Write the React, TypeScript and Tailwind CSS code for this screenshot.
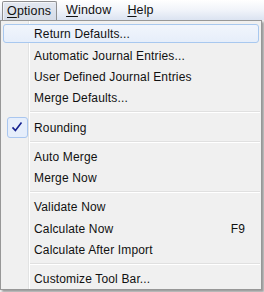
import { ReactNode } from 'react';

// item do menu: altura fixa, texto alinhado depois da calha dos ícones
type Item = {
  label: string;
  shortcut?: string;
  checked?: boolean;
  hover?: boolean;
};

const groups: Item[][] = [
  [
    { label: 'Return Defaults...', hover: true },
    { label: 'Automatic Journal Entries...' },
    { label: 'User Defined Journal Entries' },
    { label: 'Merge Defaults...' },
  ],
  [{ label: 'Rounding', checked: true }],
  [{ label: 'Auto Merge' }, { label: 'Merge Now' }],
  [
    { label: 'Validate Now' },
    { label: 'Calculate Now', shortcut: 'F9' },
    { label: 'Calculate After Import' },
  ],
  [{ label: 'Customize Tool Bar...' }],
];

function Mnemonic({ first, rest }: { first: string; rest: string }) {
  return (
    <span>
      <span className="underline underline-offset-[2px]">{first}</span>
      {rest}
    </span>
  );
}

function BarItem({ children, open }: { children: ReactNode; open?: boolean }) {
  return (
    <div
      className={
        open
          ? 'flex h-[19px] w-[55px] items-center rounded-t-[2px] border border-b-0 border-[#8e8f91] bg-gradient-to-b from-[#e3e8f1] to-[#d5dce8] px-[4px] text-[12.5px] shadow-[inset_1px_1px_0_rgba(255,255,255,0.6)]'
          : 'flex h-[19px] items-center pl-[9px] pr-[7px] text-[12.5px]'
      }
    >
      {children}
    </div>
  );
}

function Check() {
  return (
    <svg width="12" height="12" viewBox="0 0 12 12" aria-hidden="true">
      <path
        d="M1.5 6.4 L4.4 9.6 L10.5 1.5"
        fill="none"
        stroke="#14208f"
        strokeWidth="1.6"
      />
    </svg>
  );
}

function MenuRow({ item }: { item: Item }) {
  return (
    <div className="relative flex h-[21.4px] items-center">
      {item.hover && (
        <div className="absolute inset-x-[2px] inset-y-[1px] rounded-[3px] border border-[#a8c8ef] bg-gradient-to-b from-[#f1f5fc] to-[#e6eefa]" />
      )}
      <div className="flex w-[30px] shrink-0 justify-center pl-[2px]">
        {item.checked && (
          <div className="flex h-[21px] w-[21px] items-center justify-center rounded-[3px] border border-[#a9c6ef] bg-[#e6eefb]">
            <Check />
          </div>
        )}
      </div>
      <span className="relative flex-1 pl-[3px] pt-[1px]">{item.label}</span>
      {item.shortcut && (
        <span className="relative pr-[16px] pt-[1px]">{item.shortcut}</span>
      )}
    </div>
  );
}

export default function App() {
  return (
    <div
      className="relative h-[292px] w-[264px] overflow-hidden bg-[#f0f0f0] text-[12px] leading-none tracking-[0.15px] text-[#111]"
      style={{ fontFamily: '"Liberation Sans", Arial, sans-serif' }}
    >
      {/* barra de menus */}
      <div className="flex h-[20px] items-end bg-gradient-to-b from-white via-[#f1f4fa] to-[#dbe3f1] pl-[2px]">
        <BarItem open>
          <Mnemonic first="O" rest="ptions" />
        </BarItem>
        <BarItem>
          <Mnemonic first="W" rest="indow" />
        </BarItem>
        <BarItem>
          <Mnemonic first="H" rest="elp" />
        </BarItem>
      </div>

      {/* menu suspenso */}
      <div className="relative w-[262px] border border-[#979797] bg-[#f0f0f0] pt-[2px] shadow-[2px_2px_2px_rgba(0,0,0,0.35)]">
        <div className="pointer-events-none absolute inset-y-0 left-[27px] w-[2px] border-l border-[#e2e3e3] after:absolute after:left-0 after:top-0 after:h-full after:w-px after:bg-white" />
        {groups.map((g, gi) => (
          <div key={gi}>
            {gi > 0 && (
              <div className="flex h-[7.8px] items-center pl-[29px] pr-[1px]">
                <div className="h-[2px] w-full border-t border-[#e0e0e0] bg-white" />
              </div>
            )}
            {g.map((it) => (
              <MenuRow key={it.label} item={it} />
            ))}
          </div>
        ))}
      </div>
    </div>
  );
}
